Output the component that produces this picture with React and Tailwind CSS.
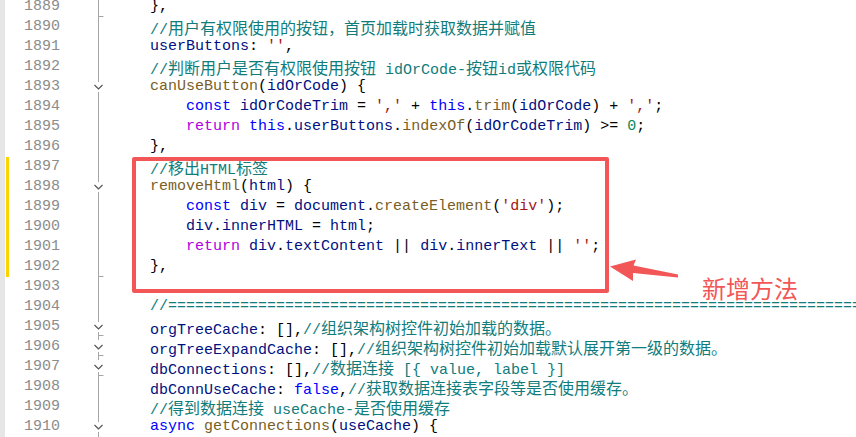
import React from "react";

const K = "text-[#0000ff]";
const R = "text-[#af00db]";
const F = "text-[#795e26]";
const V = "text-[#001080]";
const S = "text-[#a31515]";
const C = "text-[#117c7c]";
const N = "text-[#098658]";
const P = "text-black";

const EQ = "//" + "=".repeat(90);

const lines = [
  [1889, [["},", P]]],
  [1890, [["//用户有权限使用的按钮，首页加载时获取数据并赋值", C]]],
  [1891, [["userButtons", V], [": ", P], ["''", S], [",", P]]],
  [1892, [["//判断用户是否有权限使用按钮 idOrCode-按钮id或权限代码", C]]],
  [1893, [["canUseButton", F], ["(", P], ["idOrCode", V], [") {", P]]],
  [1894, [["    ", P], ["const", K], [" ", P], ["idOrCodeTrim", V], [" = ", P], ["','", S], [" + ", P], ["this", K], [".", P], ["trim", F], ["(", P], ["idOrCode", V], [") + ", P], ["','", S], [";", P]]],
  [1895, [["    ", P], ["return", R], [" ", P], ["this", K], [".", P], ["userButtons", V], [".", P], ["indexOf", F], ["(", P], ["idOrCodeTrim", V], [") >= ", P], ["0", N], [";", P]]],
  [1896, [["},", P]]],
  [1897, [["//移出HTML标签", C]]],
  [1898, [["removeHtml", F], ["(", P], ["html", V], [") {", P]]],
  [1899, [["    ", P], ["const", K], [" ", P], ["div", V], [" = ", P], ["document", V], [".", P], ["createElement", F], ["(", P], ["'div'", S], [");", P]]],
  [1900, [["    ", P], ["div", V], [".", P], ["innerHTML", V], [" = ", P], ["html", V], [";", P]]],
  [1901, [["    ", P], ["return", R], [" ", P], ["div", V], [".", P], ["textContent", V], [" || ", P], ["div", V], [".", P], ["innerText", V], [" || ", P], ["''", S], [";", P]]],
  [1902, [["},", P]]],
  [1903, []],
  [1904, [[EQ, C]]],
  [1905, [["orgTreeCache", V], [": [],", P], ["//组织架构树控件初始加载的数据。", C]]],
  [1906, [["orgTreeExpandCache", V], [": [],", P], ["//组织架构树控件初始加载默认展开第一级的数据。", C]]],
  [1907, [["dbConnections", V], [": [],", P], ["//数据连接 [{ value, label }]", C]]],
  [1908, [["dbConnUseCache", V], [": ", P], ["false", K], [",", P], ["//获取数据连接表字段等是否使用缓存。", C]]],
  [1909, [["//得到数据连接 useCache-是否使用缓存", C]]],
  [1910, [["async", K], [" ", P], ["getConnections", F], ["(", P], ["useCache", V], [") {", P]]],
];

const changed = new Set([1897, 1898, 1899, 1900, 1901, 1902]);

function renderText(text) {
  const parts = text.split(/([\u2E80-\u9FFF\u3000-\u303F\uFF00-\uFFEF]+)/);
  return parts.map((p, i) =>
    i % 2 === 1 ? (
      <span key={i} className="font-['Noto_Sans_CJK_SC',sans-serif] text-[16px]">
        {p}
      </span>
    ) : (
      <React.Fragment key={i}>{p}</React.Fragment>
    )
  );
}

function Chevron({ y }) {
  return (
    <polyline
      points={`34.5,${y - 2} 38.5,${y + 2} 42.5,${y - 2}`}
      fill="none"
      stroke="#555"
      strokeWidth="1.2"
    />
  );
}

function FoldGutter() {
  // svg y = page y + 3 ; x = page x - 60
  const o = 3;
  const X = 38.5;
  const seg = (a, b) => (
    <line x1={X} y1={a + o} x2={X} y2={b + o} stroke="#a6a6a6" strokeWidth="1" />
  );
  const tick = (y) => (
    <line x1={X} y1={y + o + 0.5} x2={X + 5} y2={y + o + 0.5} stroke="#a6a6a6" strokeWidth="1" />
  );
  return (
    <svg width="90" height="440" className="block">
      {seg(-3, 82)}
      {tick(16)}
      <Chevron y={87 + o} />
      {seg(92, 182)}
      <Chevron y={187 + o} />
      {seg(192, 322)}
      {tick(276)}
      <Chevron y={327 + o} />
      {seg(332, 340)}
      {tick(335)}
      <Chevron y={347 + o} />
      {seg(352, 360)}
      {tick(355)}
      <Chevron y={367 + o} />
      {seg(372, 422)}
      {tick(375)}
      <Chevron y={427 + o} />
      {seg(432, 440)}
    </svg>
  );
}

export default function App() {
  return (
    <div className="relative w-[856px] h-[437px] overflow-hidden bg-white font-['Liberation_Mono',monospace] text-[15px]">
      <div className="flex mt-[-3px]">
        <div className="w-[5px] shrink-0 bg-[#e6e6e6]" />
        <div className="w-[4px] shrink-0 flex flex-col">
          {lines.map(([n]) => (
            <div key={n} className="h-[20px]">
              {changed.has(n) && <div className="ml-[1px] w-[3px] h-full bg-[#fcd400]" />}
            </div>
          ))}
        </div>
        <div className="w-[51px] shrink-0 flex flex-col text-right text-[#8c8c8c]">
          {lines.map(([n]) => (
            <div key={n} className="h-[20px] leading-[20px]">
              {n}
            </div>
          ))}
        </div>
        <div className="w-[90px] shrink-0">
          <FoldGutter />
        </div>
        <div className="flex-1 min-w-0 flex flex-col">
          {lines.map(([n, toks]) => (
            <div key={n} className="h-[20px] leading-[20px] whitespace-pre overflow-hidden">
              {toks.map(([t, c], i) => (
                <span key={i} className={c}>
                  {renderText(t)}
                </span>
              ))}
            </div>
          ))}
        </div>
      </div>

      <div className="absolute left-[132px] top-[157px] w-[477px] h-[136px] border-[4px] border-[#f25656] rounded-[2px]" />

      <svg className="absolute left-0 top-0" width="856" height="437">
        <polygon
          points="610,266.5 636,259.5 633.5,265.5 678,274.5 678,277.5 633,273 633,281"
          fill="#f25656"
        />
      </svg>

      <div className="absolute left-[702px] top-[275px] text-[24px] leading-[26px] text-[#f25656] font-['Noto_Sans_CJK_SC',sans-serif]">
        新增方法
      </div>
    </div>
  );
}
